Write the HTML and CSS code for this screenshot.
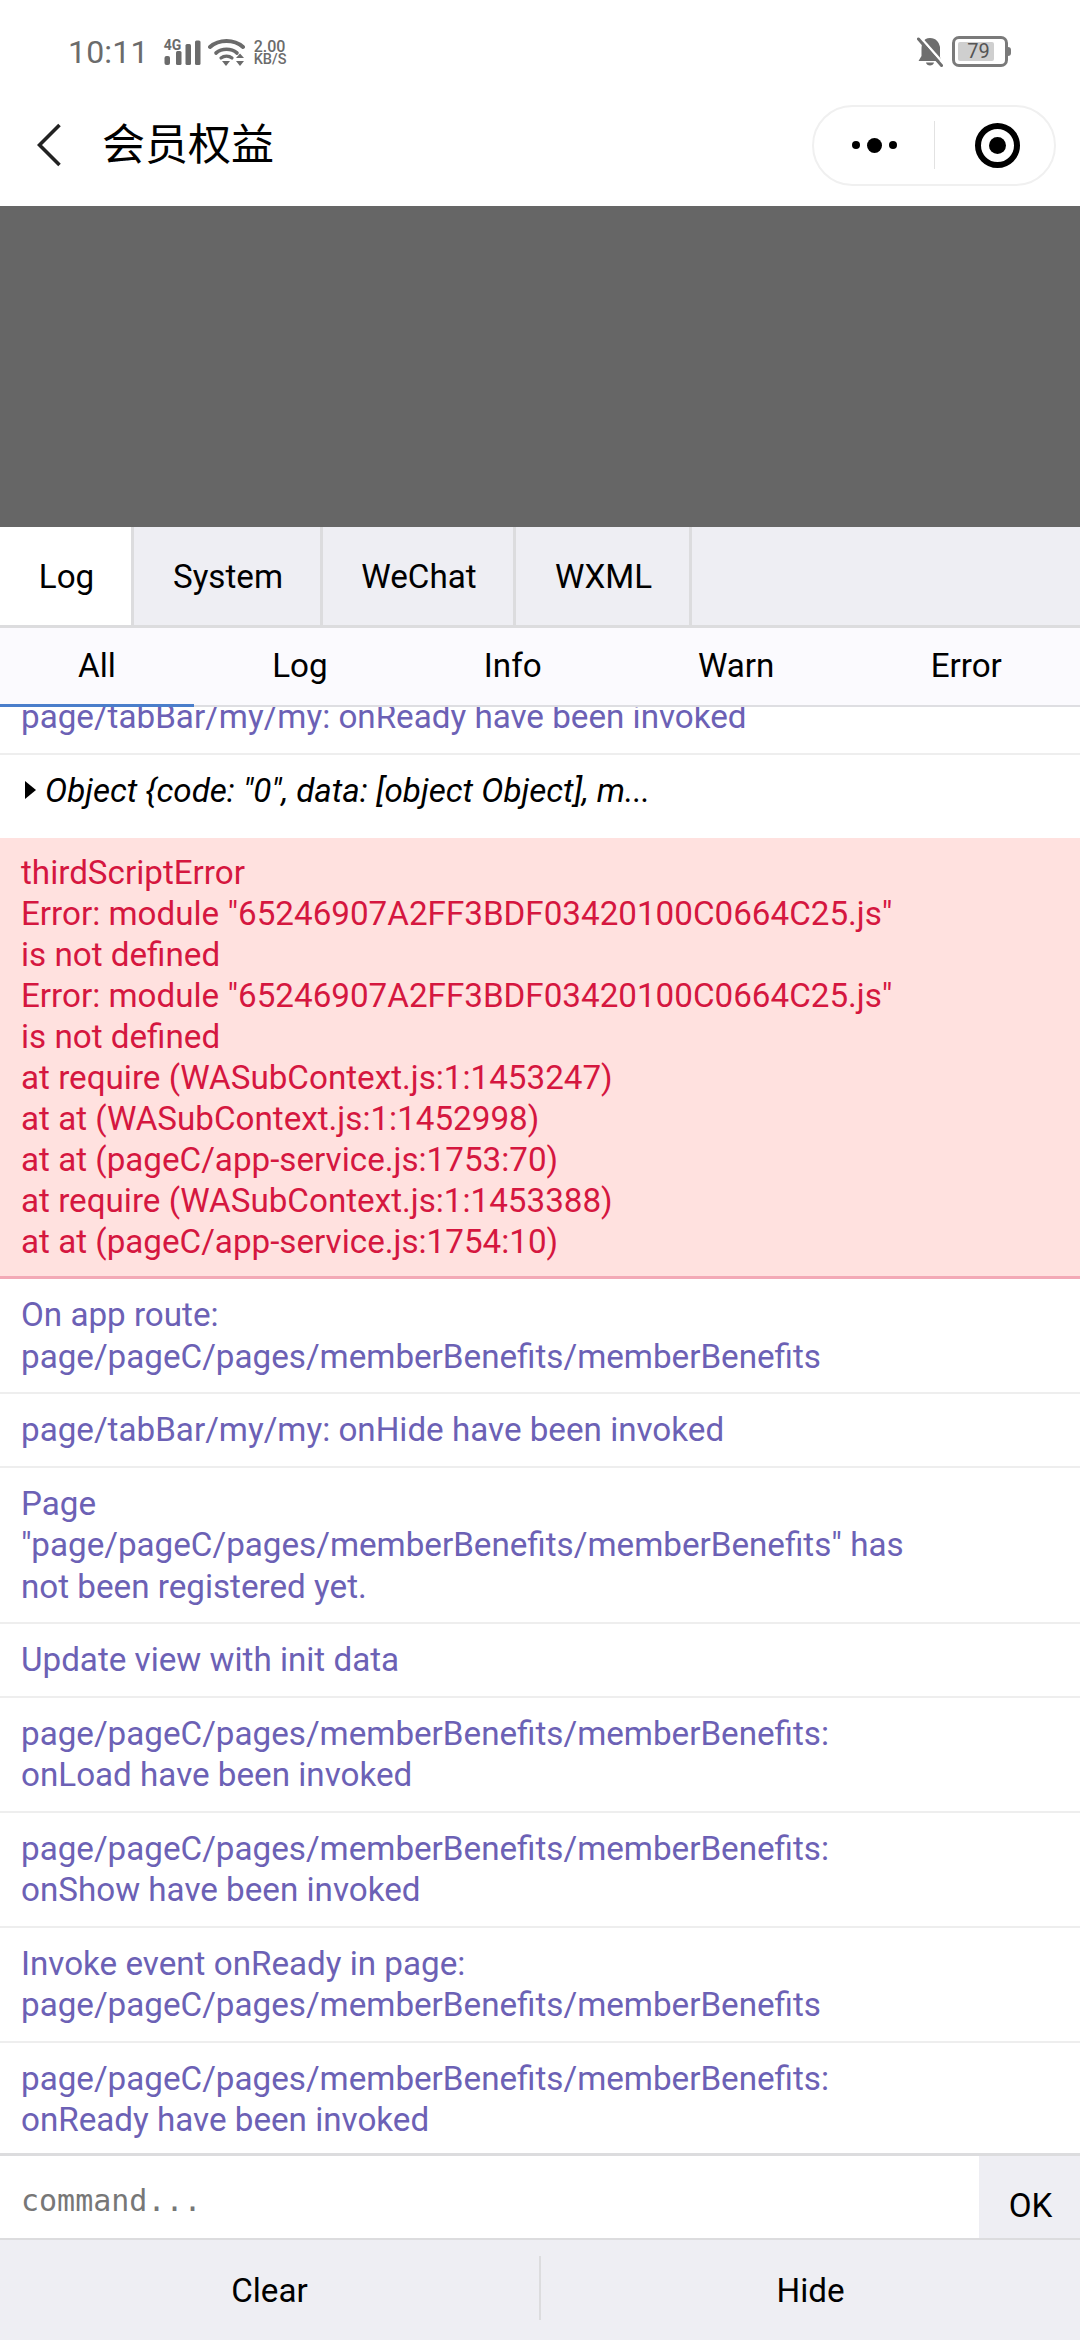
FILE: index.html
```html
<!DOCTYPE html>
<html lang="zh">
<head>
<meta charset="utf-8">
<title>会员权益</title>
<link rel="stylesheet" href="styles.css">
</head>
<body>
<div class="page">
  <div class="statusbar">
    <span class="time">10:11</span>
    <div class="signal">
      <span class="net-type">4G</span>
      <svg class="ic-signal" width="37" height="26" viewBox="0 0 37 26" aria-hidden="true">
        <rect x="0.5" y="16" width="5.5" height="9" rx="2" fill="#6b6b6b"/>
        <rect x="12" y="11" width="5.5" height="14" rx="1.5" fill="#6b6b6b"/>
        <rect x="21.5" y="4" width="5.5" height="21" rx="1.5" fill="#6b6b6b"/>
        <rect x="31" y="0.5" width="5.5" height="24.5" rx="1.5" fill="#6b6b6b"/>
      </svg>
    </div>
    <svg class="ic-wifi" width="37" height="29" viewBox="0 0 37 29" aria-hidden="true">
      <path d="M2 9 C11 1 26 1 35 9" fill="none" stroke="#6b6b6b" stroke-width="4" stroke-linecap="round"/>
      <path d="M8 15 C14 10 23 10 29 15" fill="none" stroke="#6b6b6b" stroke-width="3.6" stroke-linecap="round"/>
      <path d="M13 20 C16 17.5 21 17.5 24 20" fill="none" stroke="#6b6b6b" stroke-width="3.2" stroke-linecap="round"/>
      <path d="M14 23 H22 L18 28 Z" fill="#6b6b6b"/>
      <path d="M28 20 H36 L32 15.5 Z M28 23 H36 L32 28 Z" fill="#6b6b6b"/>
    </svg>
    <div class="speed"><span>2.00</span><span class="speed-unit">KB/S</span></div>
    <div class="status-right">
      <svg class="ic-bell" width="26" height="30" viewBox="0 0 26 30" aria-hidden="true">
        <path d="M13 1 C6 1 4.5 7 4.5 12 V19 L1.5 24 H24.5 L23 20 V10 C22 5 19 1 13 1 Z M9 25.5 C9.5 29.5 16.5 29.5 17 25.5 Z" fill="#6e6e6e"/>
        <path d="M3.5 0.5 L26 26" stroke="#fff" stroke-width="2.5"/>
        <path d="M1.5 2 L24.5 28.5" stroke="#6e6e6e" stroke-width="3" stroke-linecap="round"/>
      </svg>
      <div class="battery">
        <div class="battery-body"><span class="battery-fill">79</span></div>
        <span class="battery-nub"></span>
      </div>
    </div>
  </div>

  <div class="navbar">
    <svg class="ic-back" width="24" height="44" viewBox="0 0 24 44" aria-hidden="true">
      <path d="M22.5 2 L2.5 22 L22.5 42" fill="none" stroke="#222" stroke-width="3.6"/>
    </svg>
    <span class="nav-title">会员权益</span>
    <div class="capsule">
      <div class="capsule-more">
        <span class="dot"></span><span class="dot dot-big"></span><span class="dot"></span>
      </div>
      <span class="capsule-line"></span>
      <div class="capsule-close"><span class="target"><span class="target-core"></span></span></div>
    </div>
  </div>

  <div class="mask"></div>

  <div class="console">
    <div class="tabs">
      <div class="tab tab-active">Log</div>
      <div class="tab">System</div>
      <div class="tab">WeChat</div>
      <div class="tab">WXML</div>
    </div>
    <div class="filters">
      <div class="filter filter-active">All</div>
      <div class="filter">Log</div>
      <div class="filter">Info</div>
      <div class="filter">Warn</div>
      <div class="filter">Error</div>
    </div>
    <div class="logs">
      <div class="row row-first">page/tabBar/my/my: onReady have been invoked</div>
      <div class="row row-object"><span class="caret"></span>Object {code: "0", data: [object Object], m...</div>
      <div class="row row-error">thirdScriptError<br>Error: module "65246907A2FF3BDF03420100C0664C25.js"<br>is not defined<br>Error: module "65246907A2FF3BDF03420100C0664C25.js"<br>is not defined<br>at require (WASubContext.js:1:1453247)<br>at at (WASubContext.js:1:1452998)<br>at at (pageC/app-service.js:1753:70)<br>at require (WASubContext.js:1:1453388)<br>at at (pageC/app-service.js:1754:10)</div>
      <div class="row">On app route:<br>page/pageC/pages/memberBenefits/memberBenefits</div>
      <div class="row">page/tabBar/my/my: onHide have been invoked</div>
      <div class="row">Page<br>"page/pageC/pages/memberBenefits/memberBenefits" has<br>not been registered yet.</div>
      <div class="row">Update view with init data</div>
      <div class="row">page/pageC/pages/memberBenefits/memberBenefits:<br>onLoad have been invoked</div>
      <div class="row">page/pageC/pages/memberBenefits/memberBenefits:<br>onShow have been invoked</div>
      <div class="row">Invoke event onReady in page:<br>page/pageC/pages/memberBenefits/memberBenefits</div>
      <div class="row">page/pageC/pages/memberBenefits/memberBenefits:<br>onReady have been invoked</div>
    </div>
    <div class="command">
      <span class="command-input">command...</span>
      <span class="command-ok">OK</span>
    </div>
    <div class="actions">
      <div class="action">Clear</div>
      <span class="action-line"></span>
      <div class="action">Hide</div>
    </div>
  </div>
</div>
</body>
</html>
```

FILE: styles.css
```css
* { box-sizing: border-box; }
html, body { margin: 0; padding: 0; background: #fff; }
.page {
  width: 1080px;
  height: 2340px;
  display: flex;
  flex-direction: column;
  overflow: hidden;
  font-family: Roboto, "Noto Sans CJK SC", sans-serif;
  color: #000;
}

/* status bar */
.statusbar {
  height: 100px;
  flex: none;
  display: flex;
  align-items: flex-start;
  padding: 34px 0 0 68px;
  color: #6b6b6b;
}
.time { font-size: 32px; line-height: 36px; letter-spacing: 0.2px; margin-right: 15px; }
.signal { position: relative; width: 37px; height: 26px; margin-top: 6px; margin-right: 7px; }
.ic-signal { display: block; }
.net-type {
  position: absolute;
  left: 0;
  top: -1px;
  font-size: 14px;
  line-height: 12px;
  font-weight: 700;
}
.ic-wifi { margin-top: 4px; margin-right: 9px; }
.speed { display: flex; flex-direction: column; margin-top: 6px; font-size: 16px; line-height: 13px; font-weight: 500; width: 36px; }
.speed-unit { font-size: 14.5px; }
.status-right { margin-left: auto; margin-right: 69px; display: flex; align-items: center; gap: 9px; margin-top: 2px; }
.battery { display: flex; align-items: center; }
.battery-body {
  width: 56px;
  height: 31px;
  border: 3px solid #7a7a7a;
  border-radius: 7px;
  padding: 3px;
}
.battery-fill {
  display: block;
  width: 36px;
  height: 19px;
  background: #cfcfcf;
  border-radius: 2px;
  color: #555;
  font-size: 20px;
  line-height: 19px;
  text-align: center;
  padding-left: 5px;
}
.battery-nub { width: 3px; height: 9px; background: #7a7a7a; border-radius: 0 3px 3px 0; }

/* navigation bar */
.navbar {
  height: 106px;
  flex: none;
  display: flex;
  align-items: center;
  padding: 0 24px 0 37px;
}
.ic-back { flex: none; margin-top: -16px; }
.nav-title { font-size: 43px; line-height: 50px; margin-left: 41px; margin-top: -16px; }
.capsule {
  margin-left: auto;
  margin-top: -16px;
  width: 244px;
  height: 81px;
  border: 2px solid #f0f0f0;
  border-radius: 41px;
  display: flex;
  align-items: center;
}
.capsule-more { flex: none; width: 120px; display: flex; align-items: center; justify-content: center; gap: 7px; }
.dot { width: 8px; height: 8px; border-radius: 50%; background: #000; }
.dot-big { width: 15px; height: 15px; }
.capsule-line { flex: none; width: 1px; height: 48px; background: #e2e2e2; }
.capsule-close { flex: 1; display: flex; justify-content: center; padding-left: 5px; }
.target {
  width: 45px;
  height: 45px;
  border: 6px solid #000;
  border-radius: 50%;
  display: flex;
  align-items: center;
  justify-content: center;
}
.target-core { width: 17px; height: 17px; border-radius: 50%; background: #000; }

/* dimmed page */
.mask { height: 321px; flex: none; background: #666; }

/* console */
.console { flex: 1; min-height: 0; display: flex; flex-direction: column; font-size: 33.2px; }
.tabs {
  height: 101px;
  flex: none;
  display: flex;
  background: #eeeef3;
  border-bottom: 3px solid #dcdcde;
}
.tab {
  display: flex;
  align-items: center;
  justify-content: center;
  border-right: 3px solid #dcdcde;
  padding: 0 0 0 2px;
}
.tab:nth-child(1) { width: 134px; }
.tab:nth-child(2) { width: 189px; }
.tab:nth-child(3) { width: 193px; }
.tab:nth-child(4) { width: 176px; }
.tab-active { background: #fff; }
.filters {
  height: 79px;
  flex: none;
  display: flex;
  background: #fbfafe;
  border-bottom: 2px solid #dedee2;
  position: relative;
  z-index: 1;
}
.filter {
  flex: 1 1 auto;
  display: flex;
  align-items: center;
  justify-content: center;
  padding-bottom: 3px;
}
.filter-active { border-bottom: 3px solid #4a7ecb; margin-bottom: -2px; padding-bottom: 1px; }

.logs { flex: 1; min-height: 0; overflow: hidden; background: #fff; }
.row {
  padding: 15px 21px;
  line-height: 41.5px;
  color: #6c61b5;
  border-bottom: 2px solid #eeeeee;
}
.row-first { margin-top: -26px; }
.row-object { color: #000; font-style: italic; padding-top: 15px; padding-bottom: 27px; border-bottom: 0; display: flex; align-items: center; }
.caret {
  width: 0;
  height: 0;
  margin: 0 9px 0 4px;
  border-style: solid;
  border-width: 9px 0 9px 11px;
  border-color: transparent transparent transparent #000;
}
.row-error {
  color: #d5173f;
  background: #ffe1df;
  border-bottom: 3px solid #f3a9b6;
  line-height: 41px;
  padding-top: 14px;
  padding-bottom: 14px;
}

.command {
  height: 87px;
  flex: none;
  display: flex;
  background: #fff;
  border-top: 3px solid #dcdcde;
  border-bottom: 2px solid #dcdcde;
}
.command-input {
  flex: 1;
  padding: 6px 0 0 21px;
  display: flex;
  align-items: center;
  font-family: "DejaVu Sans Mono", monospace;
  font-size: 30px;
  color: #777;
}
.command-ok {
  width: 101px;
  background: #eeeef3;
  display: flex;
  align-items: flex-end;
  justify-content: center;
  line-height: 41px;
  padding: 0 0 12px 2px;
}
.actions {
  height: 100px;
  flex: none;
  display: flex;
  align-items: center;
  background: #eeeef3;
}
.action { flex: 1; text-align: center; }
.action-line { width: 2px; height: 64px; background: #dcdcde; flex: none; margin-top: -4px; }
```
